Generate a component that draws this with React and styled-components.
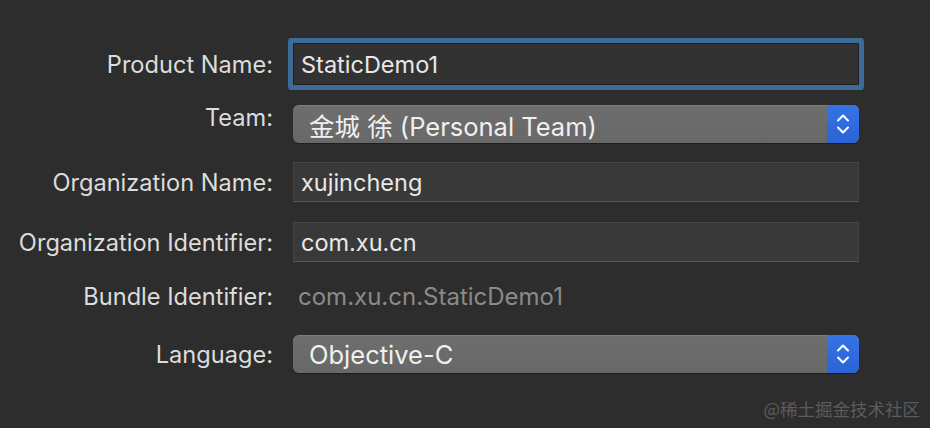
import React from "react";
import styled, { createGlobalStyle } from "styled-components";

const Global = createGlobalStyle`
  html, body { margin: 0; padding: 0; background: #2d2d2d; }
  body { width: 930px; height: 428px; overflow: hidden; font-family: Inter, "Noto Sans", "Noto Sans CJK SC", sans-serif; }
`;

const Page = styled.div`
  position: relative;
  width: 930px;
  height: 428px;
  background: #2d2d2d;
  padding-top: 43px;
  box-sizing: border-box;
  display: flex;
  flex-direction: column;
  gap: 20px;
`;

const Row = styled.div`
  display: grid;
  grid-template-columns: 273px 566px;
  column-gap: 20px;
  align-items: center;
  height: ${(p) => p.$h}px;
  margin-top: ${(p) => p.$mt || 0}px;
`;

const Label = styled.div`
  text-align: right;
  color: #dcdcdc;
  font-size: 23.6px;
  white-space: nowrap;
  transform: translateY(${(p) => p.$lift || 0}px);
`;

const Field = styled.div`
  height: 100%;
  box-sizing: border-box;
  display: flex;
  align-items: center;
  padding-left: 7px;
  color: #e8e8e8;
  font-size: 23.5px;
  background: ${(p) => (p.$focused ? "#323232" : "#393939")};
  border: 1px solid ${(p) => (p.$focused ? "#1f1f1f" : "#444")};
  border-bottom-color: ${(p) => (p.$focused ? "#1f1f1f" : "#585858")};
  box-shadow: ${(p) => (p.$focused ? "0 0 0 5px #3c6b98" : "none")};
  border-radius: ${(p) => (p.$focused ? "1px" : "0")};
`;

const Plain = styled.div`
  color: #8a8a8a;
  font-size: 24px;
  padding-left: 5px;
`;

const Popup = styled.div`
  height: 100%;
  display: flex;
  align-items: stretch;
  border-radius: 6px;
  overflow: hidden;
  background: linear-gradient(#6e6e6e, #686868);
  box-shadow: 0 1px 1px rgba(0, 0, 0, 0.35), inset 0 1px 0 rgba(255, 255, 255, 0.12);
`;

const PopupText = styled.div`
  flex: 1;
  display: flex;
  align-items: center;
  padding-left: 16px;
  color: #f0f0f0;
  font-size: 25.5px;
  white-space: nowrap;
`;

const Stepper = styled.div`
  width: 32px;
  display: flex;
  align-items: center;
  justify-content: center;
  background: linear-gradient(#3574e6, #2a63d6);
`;

const Watermark = styled.div`
  position: absolute;
  right: 10px;
  bottom: 7px;
  color: #5c5c5c;
  font-size: 17.5px;
  font-family: "Noto Sans CJK SC", sans-serif;
`;

const Chevrons = () => (
  <svg width="16" height="26" viewBox="0 0 16 26" fill="none">
    <path d="M3 9.5 L8 4.5 L13 9.5" stroke="#fff" strokeWidth="2" strokeLinecap="round" strokeLinejoin="round" />
    <path d="M3 16.5 L8 21.5 L13 16.5" stroke="#fff" strokeWidth="2" strokeLinecap="round" strokeLinejoin="round" />
  </svg>
);

export default function App() {
  return (
    <>
      <Global />
      <Page>
        <Row $h={42}>
          <Label>Product Name:</Label>
          <Field $focused>StaticDemo1</Field>
        </Row>
        <Row $h={38}>
          <Label $lift={-7}>Team:</Label>
          <Popup>
            <PopupText>金城 徐 (Personal Team)</PopupText>
            <Stepper><Chevrons /></Stepper>
          </Popup>
        </Row>
        <Row $h={40} $mt={-1}>
          <Label>Organization Name:</Label>
          <Field>xujincheng</Field>
        </Row>
        <Row $h={40}>
          <Label>Organization Identifier:</Label>
          <Field>com.xu.cn</Field>
        </Row>
        <Row $h={26}>
          <Label>Bundle Identifier:</Label>
          <Plain>com.xu.cn.StaticDemo1</Plain>
        </Row>
        <Row $h={38} $mt={7}>
          <Label>Language:</Label>
          <Popup>
            <PopupText>Objective-C</PopupText>
            <Stepper><Chevrons /></Stepper>
          </Popup>
        </Row>
        <Watermark>@稀土掘金技术社区</Watermark>
      </Page>
    </>
  );
}
